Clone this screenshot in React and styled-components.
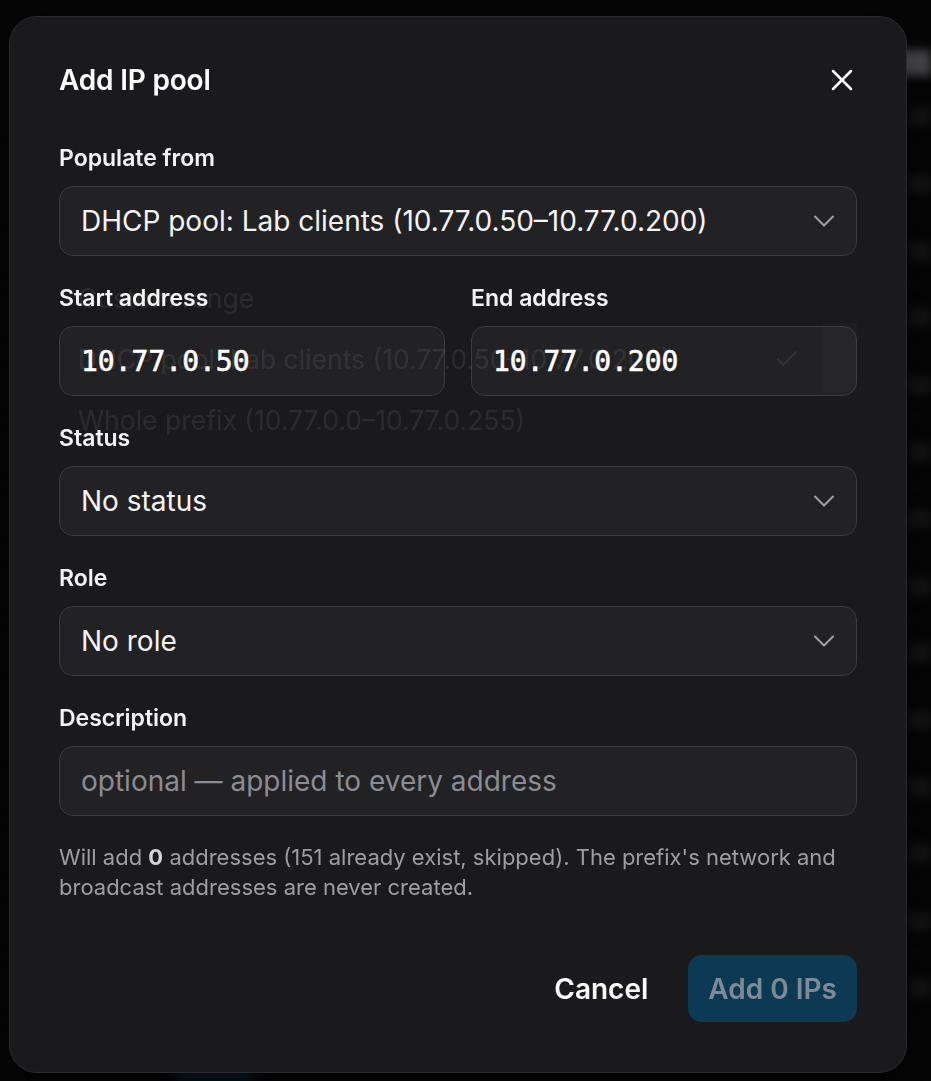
import React from "react";
import styled, { createGlobalStyle } from "styled-components";
import { ChevronDown, X, Check } from "lucide-react";

const GlobalStyle = createGlobalStyle`
  * { box-sizing: border-box; }
  html, body { margin: 0; padding: 0; background: #0a0a0b; }
  body {
    font-family: Inter, "Noto Sans", "Liberation Sans", sans-serif;
    color: #f4f4f5;
    overflow: hidden;
  }
`;

const sources = [
  "Custom range",
  "DHCP pool: Lab clients (10.77.0.50–10.77.0.200)",
  "Whole prefix (10.77.0.0–10.77.0.255)",
];

function Select({ value, children }) {
  return (
    <SelectBox>
      <SelectValue>{value}</SelectValue>
      <ChevronDown size={36} strokeWidth={2} absoluteStrokeWidth color="#a1a1aa" />
      {children}
    </SelectBox>
  );
}

function App() {
  return (
    <>
      <GlobalStyle />
      <Page>
        <PageHeader>
          <HeaderButton />
        </PageHeader>
        {Array.from({ length: 14 }).map((_, i) => (
          <PageRow key={i}>
            <RowBadge />
          </PageRow>
        ))}
        <PageFooter>
          <FooterButton />
        </PageFooter>
      </Page>

      <Overlay>
        <Dialog>
          <Header>
            <Title>Add IP pool</Title>
            <CloseButton aria-label="Close">
              <X size={36} strokeWidth={2.5} absoluteStrokeWidth color="#ffffff" />
            </CloseButton>
          </Header>

          <Form>
            <Field>
              <Label>Populate from</Label>
              <Select value="DHCP pool: Lab clients (10.77.0.50–10.77.0.200)">
                <Menu>
                  {sources.map((s, i) => (
                    <MenuItem key={s}>
                      <span>{s}</span>
                      {i === 1 && <Check size={28} strokeWidth={2} absoluteStrokeWidth />}
                    </MenuItem>
                  ))}
                  <MenuTrack />
                </Menu>
              </Select>
            </Field>

            <Pair>
              <Field>
                <Label>Start address</Label>
                <Input>
                  <Mono>10.77.0.50</Mono>
                </Input>
              </Field>
              <Field>
                <Label>End address</Label>
                <Input>
                  <Mono>10.77.0.200</Mono>
                </Input>
              </Field>
            </Pair>

            <Field>
              <Label>Status</Label>
              <Select value="No status" />
            </Field>

            <Field>
              <Label>Role</Label>
              <Select value="No role" />
            </Field>

            <Field>
              <Label>Description</Label>
              <Input>
                <Placeholder>optional — applied to every address</Placeholder>
              </Input>
            </Field>
          </Form>

          <Hint>
            Will add <b>0</b> addresses (151 already exist, skipped). The prefix's network and
            broadcast addresses are never created.
          </Hint>

          <Footer>
            <GhostButton>Cancel</GhostButton>
            <PrimaryButton disabled>Add 0 IPs</PrimaryButton>
          </Footer>
        </Dialog>
      </Overlay>
    </>
  );
}

/* page behind the dialog */
const Page = styled.div`
  display: flex;
  flex-direction: column;
  height: 100vh;
  padding-top: 44px;
  filter: blur(5px);
`;

const PageHeader = styled.div`
  display: flex;
  justify-content: flex-end;
  height: 40px;
`;

const HeaderButton = styled.div`
  width: 40px;
  height: 26px;
  margin-top: 6px;
  border-radius: 6px 0 0 6px;
  background: #8a8a8e;
`;

const PageRow = styled.div`
  display: flex;
  justify-content: flex-end;
  align-items: center;
  height: 67px;
  border-bottom: 1px solid #161618;
`;

const RowBadge = styled.div`
  width: 22px;
  height: 18px;
  border-radius: 4px 0 0 4px;
  background: #2a2a2d;
`;

const PageFooter = styled.div`
  margin-top: auto;
  display: flex;
  padding-left: 175px;
`;

const FooterButton = styled.div`
  width: 80px;
  height: 12px;
  border-radius: 6px 6px 0 0;
  background: #123a52;
`;

/* dialog */
const Overlay = styled.div`
  position: fixed;
  inset: 0;
  display: flex;
  align-items: flex-start;
  padding: 16px 0 0 9px;
  background: rgba(0, 0, 0, 0.45);
`;

const Dialog = styled.div`
  width: 898px;
  height: 1057px;
  display: flex;
  flex-direction: column;
  padding: 47px 49px 50px 49px;
  background: #1a1a1c;
  border: 1px solid #2c2c30;
  border-radius: 28px;
  box-shadow: 0 20px 60px rgba(0, 0, 0, 0.6);
`;

const Header = styled.div`
  display: flex;
  align-items: center;
  justify-content: space-between;
  height: 32px;
`;

const Title = styled.h2`
  margin: 0;
  font-size: 28px;
  line-height: 32px;
  font-weight: 600;
  letter-spacing: -0.2px;
  color: #ffffff;
`;

const CloseButton = styled.button`
  display: flex;
  align-items: center;
  justify-content: center;
  width: 36px;
  height: 36px;
  margin-right: -3px;
  padding: 0;
  border: none;
  background: transparent;
  cursor: pointer;
`;

const Form = styled.div`
  display: flex;
  flex-direction: column;
  gap: 28px;
  margin-top: 48px;
`;

const Pair = styled.div`
  display: grid;
  grid-template-columns: 1fr 1fr;
  gap: 26px;
`;

const Field = styled.div`
  display: flex;
  flex-direction: column;
  gap: 14px;
  min-width: 0;
`;

const Label = styled.label`
  font-size: 23px;
  line-height: 28px;
  font-weight: 600;
  color: #f4f4f5;
`;

const Control = styled.div`
  position: relative;
  display: flex;
  align-items: center;
  height: 70px;
  padding: 0 14px 0 21px;
  background: #222225;
  border: 1.5px solid #3a3a3f;
  border-radius: 14px;
`;

const SelectBox = styled(Control)`
  justify-content: space-between;
`;

const Input = styled(Control)``;

const SelectValue = styled.span`
  font-size: 28px;
  font-weight: 400;
  color: #f4f4f5;
  white-space: nowrap;
`;

const Mono = styled.span`
  font-family: "DejaVu Sans Mono", "Liberation Mono", monospace;
  font-size: 28px;
  font-weight: 400;
  -webkit-text-stroke: 0.6px #ffffff;
  color: #ffffff;
`;

const Placeholder = styled.span`
  font-size: 28px;
  color: #8c8c93;
`;

/* closing option list, nearly faded out */
const Menu = styled.div`
  position: absolute;
  top: calc(100% + 6px);
  left: -1px;
  right: -1px;
  display: flex;
  flex-direction: column;
  padding: 6px 0;
  opacity: 0.075;
  pointer-events: none;
  z-index: 2;
`;

const MenuItem = styled.div`
  display: flex;
  align-items: center;
  justify-content: space-between;
  height: 61px;
  padding: 0 56px 0 19px;
  font-size: 26.5px;
  color: #ffffff;
  white-space: nowrap;
`;

const MenuTrack = styled.div`
  position: absolute;
  top: 62px;
  right: 0;
  width: 36px;
  height: 70px;
  background: rgba(255, 255, 255, 0.25);
`;

const Hint = styled.p`
  margin: 26px 0 0;
  font-size: 22px;
  line-height: 30px;
  color: #9d9da3;

  b {
    font-weight: 700;
    color: #d4d4d8;
  }
`;

const Footer = styled.div`
  display: flex;
  justify-content: flex-end;
  align-items: center;
  gap: 20px;
  margin-top: auto;
`;

const GhostButton = styled.button`
  height: 67px;
  padding: 0 20px;
  border: none;
  background: transparent;
  font-family: inherit;
  font-size: 28px;
  font-weight: 600;
  color: #ffffff;
`;

const PrimaryButton = styled.button`
  height: 67px;
  padding: 0 20px;
  border: none;
  border-radius: 14px;
  background: #0c3a55;
  font-family: inherit;
  font-size: 28px;
  font-weight: 600;
  color: #7e8a94;
`;

export default App;
